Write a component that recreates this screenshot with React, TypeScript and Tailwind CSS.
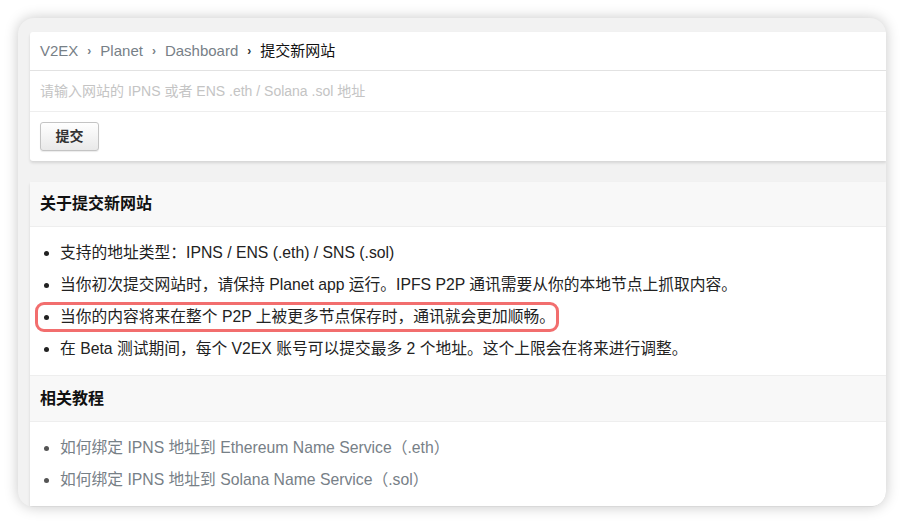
import React from "react";

const font = "font-['Liberation_Sans','Noto_Sans_CJK_SC',sans-serif]";

function Dot({ gray }: { gray?: boolean }) {
  return <span className={`w-[5px] h-[5px] rounded-full shrink-0 ${gray ? "bg-[#555]" : "bg-[#222]"}`} />;
}

function Item({ children }: { children: React.ReactNode }) {
  return (
    <li className="flex items-center gap-[11px] pl-[14px] h-[32px] text-[15.75px] text-[#222]">
      <Dot />
      <span>{children}</span>
    </li>
  );
}

function LinkItem({ children }: { children: React.ReactNode }) {
  return (
    <li className="flex items-center gap-[11px] pl-[14px] h-[32px] text-[15.75px] text-[#778087]">
      <Dot gray />
      <span>{children}</span>
    </li>
  );
}

export default function App() {
  return (
    <div className={`w-[904px] h-[527px] bg-white pt-[18px] pl-[18px] overflow-hidden ${font}`}>
      <div className="w-[868px] h-[489px] rounded-[16px] bg-[#f2f2f2] shadow-[0_0_14px_rgba(0,0,0,0.22)] pl-[12px] pt-[14px] overflow-hidden">
        {/* top card */}
        <div className="bg-white rounded-l-[3px] shadow-[0_2px_3px_rgba(0,0,0,0.12)]">
          <div className="h-[39px] px-[10px] flex items-center gap-[9px] text-[15px] border-b border-[#e2e2e2]">
            <span className="text-[#778087]">V2EX</span>
            <span className="text-[#778087] text-[12px] font-bold">›</span>
            <span className="text-[#778087]">Planet</span>
            <span className="text-[#778087] text-[12px] font-bold">›</span>
            <span className="text-[#778087]">Dashboard</span>
            <span className="text-[#333] text-[12px] font-bold">›</span>
            <span className="text-[#111]">提交新网站</span>
          </div>
          <div className="h-[41px] px-[10px] flex items-center text-[14px] text-[#c4c4c4] border-b border-[#eeeeee]">
            请输入网站的 IPNS 或者 ENS .eth / Solana .sol 地址
          </div>
          <div className="h-[49px] px-[10px] flex items-center">
            <button className="w-[59px] h-[29px] rounded-[3px] border border-[#c4c4c4] bg-gradient-to-b from-white to-[#e9e9e9] shadow-[0_1px_1px_rgba(0,0,0,0.08)] text-[14px] font-bold text-[#333]">
              提交
            </button>
          </div>
        </div>

        {/* info card */}
        <div className="mt-[21px] bg-white shadow-[0_2px_3px_rgba(0,0,0,0.12)] rounded-br-[14px]">
          <div className="h-[45px] px-[10px] flex items-center bg-[#f8f8f8] border-b border-[#eeeeee] text-[16px] font-bold text-[#111]">
            关于提交新网站
          </div>
          <ul className="py-[10px]">
            <Item>支持的地址类型：IPNS / ENS (.eth) / SNS (.sol)</Item>
            <Item>当你初次提交网站时，请保持 Planet app 运行。IPFS P2P 通讯需要从你的本地节点上抓取内容。</Item>
            <li className="h-[32px] flex items-center">
              <div className="ml-[5px] h-[30px] inline-flex items-center gap-[11px] pl-[6px] pr-[1px] border-[3px] border-[#f26e6e] rounded-[9px] text-[15.75px] text-[#222]">
                <Dot />
                <span>当你的内容将来在整个 P2P 上被更多节点保存时，通讯就会更加顺畅。</span>
              </div>
            </li>
            <Item>在 Beta 测试期间，每个 V2EX 账号可以提交最多 2 个地址。这个上限会在将来进行调整。</Item>
          </ul>
          <div className="h-[47px] px-[10px] flex items-center bg-[#f8f8f8] border-y border-[#eeeeee] text-[16px] font-bold text-[#111]">
            相关教程
          </div>
          <ul className="py-[10px]">
            <LinkItem>如何绑定 IPNS 地址到 Ethereum Name Service（.eth）</LinkItem>
            <LinkItem>如何绑定 IPNS 地址到 Solana Name Service（.sol）</LinkItem>
          </ul>
        </div>
      </div>
    </div>
  );
}
